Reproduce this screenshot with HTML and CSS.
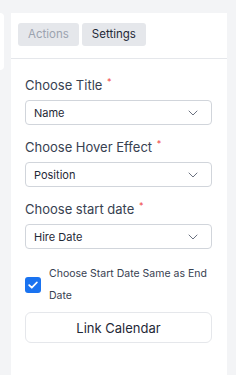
FILE: index.html
```html
<!DOCTYPE html>
<html lang="en">
<head>
<meta charset="utf-8">
<title>Settings</title>
<link rel="stylesheet" href="styles.css">
</head>
<body>
<div class="layout">
  <div class="side"></div>
  <div class="panel">
    <div class="tabs">
      <button class="tab tab-muted">Actions</button>
      <button class="tab tab-active">Settings</button>
    </div>
    <div class="content">
      <div class="field">
        <label class="label">Choose Title <span class="req">*</span></label>
        <div class="select"><span>Name</span>
          <svg class="chev" width="10" height="6" viewBox="0 0 10 6"><path d="M1 1l4 4 4-4" fill="none" stroke="#6b7280" stroke-width="1" stroke-linecap="round" stroke-linejoin="round"/></svg>
        </div>
      </div>
      <div class="field">
        <label class="label">Choose Hover Effect <span class="req">*</span></label>
        <div class="select"><span>Position</span>
          <svg class="chev" width="10" height="6" viewBox="0 0 10 6"><path d="M1 1l4 4 4-4" fill="none" stroke="#6b7280" stroke-width="1" stroke-linecap="round" stroke-linejoin="round"/></svg>
        </div>
      </div>
      <div class="field">
        <label class="label">Choose start date <span class="req">*</span></label>
        <div class="select"><span>Hire Date</span>
          <svg class="chev" width="10" height="6" viewBox="0 0 10 6"><path d="M1 1l4 4 4-4" fill="none" stroke="#6b7280" stroke-width="1" stroke-linecap="round" stroke-linejoin="round"/></svg>
        </div>
      </div>
      <div class="check-row">
        <span class="checkbox">
          <svg width="10" height="8" viewBox="0 0 10 8"><path d="M1.2 4.2l2.6 2.5 5-5.2" fill="none" stroke="#fff" stroke-width="1.8" stroke-linecap="round" stroke-linejoin="round"/></svg>
        </span>
        <span class="check-text">Choose Start Date Same as End Date</span>
      </div>
      <button class="link-btn">Link Calendar</button>
    </div>
  </div>
</div>
</body>
</html>
```

FILE: styles.css
```css
* { box-sizing: border-box; }
html, body { margin: 0; padding: 0; }
body {
  background: #f3f4f6;
  font-family: Inter, "Noto Sans", sans-serif;
  color: #374151;
  width: 236px;
  height: 375px;
  overflow: hidden;
}
.layout {
  display: flex;
  align-items: flex-start;
  padding-top: 13px;
}
.side {
  width: 4px;
  height: 57px;
  background: #ffffff;
  border-radius: 0 6px 6px 0;
}
.panel {
  margin-left: 7px;
  width: 216px;
  min-height: 362px;
  background: #ffffff;
}
.tabs {
  display: flex;
  gap: 3px;
  padding: 10px 7px 12px;
  border-bottom: 1px solid #e5e7eb;
}
.tab {
  height: 23px;
  padding: 0 10px;
  border: none;
  border-radius: 3px;
  background: #e5e7eb;
  font-family: inherit;
  font-size: 11.5px;
  line-height: 23px;
}
.tab-muted { color: #9ca3af; }
.tab-active { color: #1f2937; }
.content {
  padding: 18px 15px 0 14px;
}
.field {
  display: flex;
  flex-direction: column;
  gap: 7px;
  margin-bottom: 14px;
}
.label {
  font-size: 13px;
  line-height: 16px;
  color: #374151;
}
.req {
  color: #ef4444;
  font-size: 9px;
  vertical-align: top;
  position: relative;
  top: -3px;
  margin-left: 1px;
}
.select {
  height: 25px;
  border: 1px solid #d1d5db;
  border-radius: 4px;
  display: flex;
  align-items: center;
  justify-content: space-between;
  padding: 0 13px 0 8px;
  font-size: 11px;
  color: #1f2937;
}
.chev { display: block; }
.check-row {
  display: flex;
  align-items: center;
  gap: 8px;
}
.checkbox {
  flex: none;
  width: 16px;
  height: 16px;
  border-radius: 3px;
  background: #1a73f0;
  display: flex;
  align-items: center;
  justify-content: center;
}
.check-text {
  font-size: 10.5px;
  line-height: 22px;
  color: #374151;
}
.link-btn {
  display: block;
  width: 100%;
  height: 31px;
  margin-top: 5px;
  border: 1px solid #e5e7eb;
  border-radius: 6px;
  background: #ffffff;
  font-family: inherit;
  font-size: 13px;
  color: #1f2937;
}
```
